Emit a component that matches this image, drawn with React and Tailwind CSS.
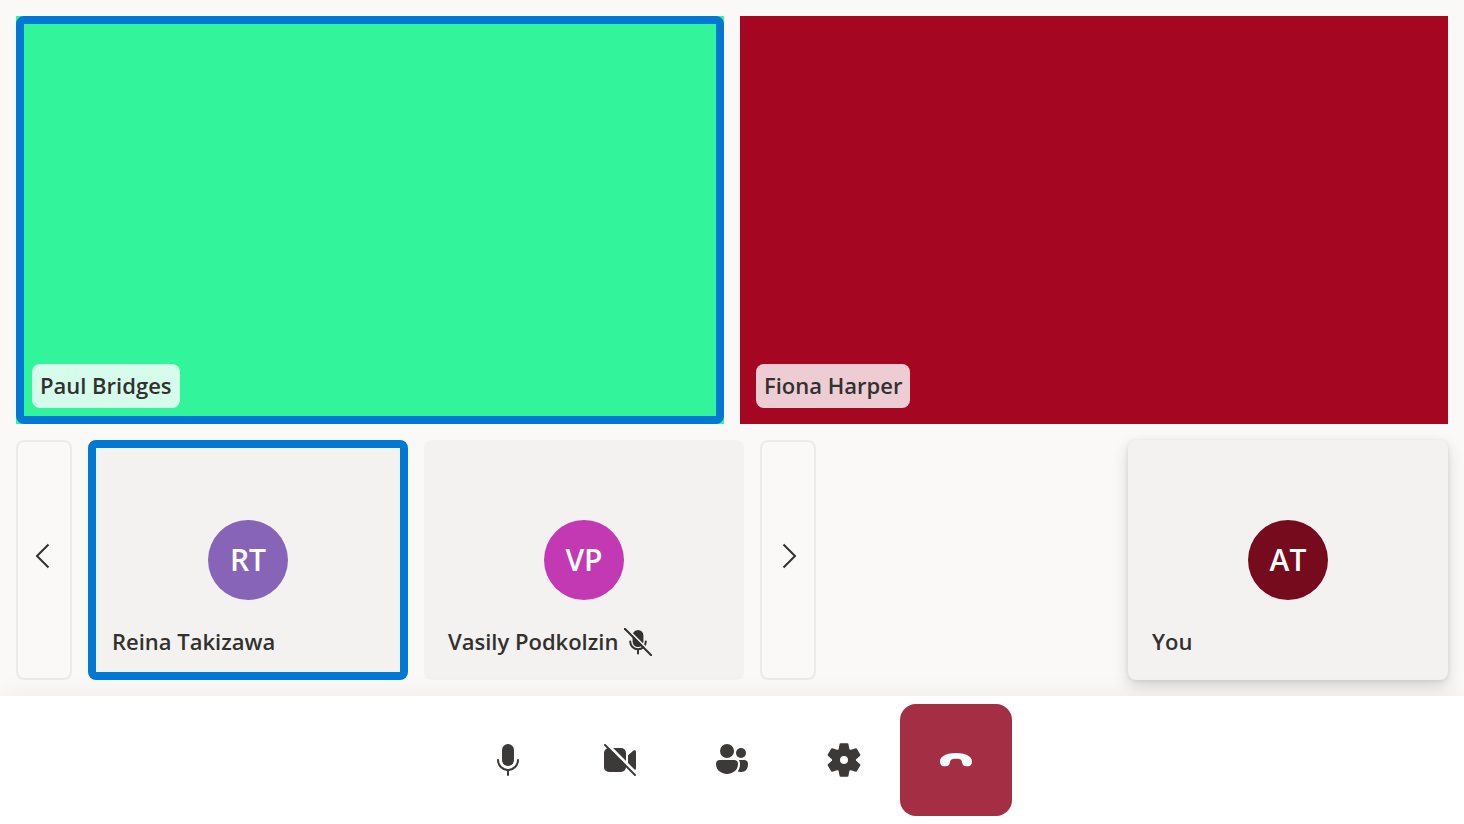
import React from "react";

function MicIcon() {
  return (
    <svg className="size-10" viewBox="0 0 20 20" fill="currentColor" aria-hidden="true">
      <rect x="7" y="2" width="6" height="11" rx="3" />
      <path d="M5 9.5c.28 0 .5.22.5.5a4.5 4.5 0 0 0 9 0 .5.5 0 0 1 1 0 5.5 5.5 0 0 1-5 5.48v2.02a.5.5 0 0 1-1 0v-2.02A5.5 5.5 0 0 1 4.5 10c0-.28.22-.5.5-.5z" />
    </svg>
  );
}

function VideoOffIcon() {
  return (
    <svg className="size-10" viewBox="0 0 20 20" fill="currentColor" aria-hidden="true">
      <rect x="2" y="4" width="11" height="12" rx="2.5" />
      <path d="M14 7.6 16.8 5.3C17.3 4.9 18 5.2 18 5.9v8.2c0 .7-.7 1-1.2.6L14 12.4z" />
      <path d="M3 1.6 18.8 17.4" stroke="#ffffff" strokeWidth="1.6" />
      <path d="M2.5 2.5 17.5 17.5" stroke="currentColor" strokeWidth="1" strokeLinecap="round" />
    </svg>
  );
}

function PeopleIcon() {
  return (
    <svg className="size-10" viewBox="0 0 20 20" fill="currentColor" aria-hidden="true">
      <circle cx="7.5" cy="5.5" r="3.5" />
      <circle cx="14.5" cy="6.5" r="2.5" />
      <path d="M4 10a2 2 0 0 0-2 2c0 1.7.7 2.9 1.9 3.8 1 .8 2.3 1.2 3.6 1.2s2.6-.4 3.6-1.2c1.2-.9 1.9-2.1 1.9-3.8a2 2 0 0 0-2-2z" />
      <path d="M13.4 10c.4.5.6 1.2.6 2 0 1.6-.4 2.9-1.2 3.8.5.15 1.1.2 1.7.2 2.4 0 3.5-1.6 3.5-4a2 2 0 0 0-2-2z" />
    </svg>
  );
}

function SettingsIcon() {
  return (
    <svg className="size-10" viewBox="-20 -20 40 40" fill="currentColor" aria-hidden="true">
      <path
        fillRule="evenodd"
        stroke="currentColor"
        strokeWidth="2"
        strokeLinejoin="round"
        d="M-3.4-15.8 3.4-15.8 4.55-10.08 6.45-8.98 11.98-10.84 15.38-4.96 11-1.1 11 1.1 15.38 4.96 11.98 10.84 6.45 8.98 4.55 10.08 3.4 15.8-3.4 15.8-4.55 10.08-6.45 8.98-11.98 10.84-15.38 4.96-11 1.1-11-1.1-15.38-4.96-11.98-10.84-6.45-8.98-4.55-10.08zM5 0A5 5 0 1 0-5 0 5 5 0 1 0 5 0z"
      />
    </svg>
  );
}

function EndCallIcon() {
  return (
    <svg className="h-4 w-8" viewBox="0 0 32 16" fill="currentColor" aria-hidden="true">
      <path d="M16 1C25 1 32 4 32 9.5c0 3-1.3 4.7-3.8 4.7h-2.3c-2 0-3-.9-3.5-2.7l-.8-2.8C21.2 7.3 19 6.7 16 6.7s-5.2.6-5.6 2l-.8 2.8c-.5 1.8-1.5 2.7-3.5 2.7H3.8C1.3 14.2 0 12.5 0 9.5 0 4 7 1 16 1z" />
    </svg>
  );
}

function MutedIcon() {
  return (
    <svg className="size-7" viewBox="0 0 28 28" fill="currentColor" aria-label="Muted" role="img">
      <rect x="8.6" y="2" width="10.8" height="17" rx="5.4" />
      <path d="M6.2 13.5a7.8 7.8 0 0 0 15.6 0M14 21.5v4" fill="none" stroke="currentColor" strokeWidth="2" strokeLinecap="round" />
      <path d="M1.2-1.2 29.2 26.8" stroke="#f3f2f1" strokeWidth="1.8" />
      <path d="M.8.8 27.2 27.2" stroke="currentColor" strokeWidth="2" strokeLinecap="round" />
    </svg>
  );
}

function PageButton({ label, path }) {
  return (
    <button
      type="button"
      aria-label={label}
      className="flex w-14 shrink-0 items-center justify-center rounded-lg border-2 border-[#edebe9] pb-2 text-[#323130]"
    >
      <svg className="size-7" viewBox="0 0 28 28" fill="none" stroke="currentColor" strokeWidth="2" aria-hidden="true">
        <path d={path} />
      </svg>
    </button>
  );
}

function VideoTile({ name, color, speaking }) {
  return (
    <section aria-label={name} className={`relative flex min-w-0 flex-1 items-end p-4 ${color}`}>
      {speaking && <div className="absolute inset-0 rounded-lg border-8 border-[#0078d4]" />}
      <span className="relative flex h-11 items-center rounded-lg bg-white/80 px-2 pb-0.5">{name}</span>
    </section>
  );
}

function AvatarTile({ name, initials, color, speaking, muted, floating }) {
  return (
    <section
      aria-label={name}
      className={`relative flex w-80 shrink-0 items-end rounded-lg bg-[#f3f2f1] p-4 ${
        floating ? "ml-auto shadow-[0_6px_16px_rgba(0,0,0,0.15),0_1px_4px_rgba(0,0,0,0.09)]" : ""
      }`}
    >
      {speaking && <div className="absolute inset-0 rounded-lg border-8 border-[#0078d4]" />}
      <div className="absolute inset-0 flex items-center justify-center">
        <div className={`flex size-20 items-center justify-center rounded-full text-[30px] text-white ${color}`}>
          {initials}
        </div>
      </div>
      <div className="relative flex h-11 items-center gap-1.5 px-2">
        <span className="pb-0.5">{name}</span>
        {muted && <MutedIcon />}
      </div>
    </section>
  );
}

function ControlButton({ label, danger, children }) {
  return (
    <button
      type="button"
      aria-label={label}
      className={`flex size-28 items-center justify-center rounded-2xl ${danger ? "bg-[#a42e43] text-white" : "text-[#3b3a39]"}`}
    >
      {children}
    </button>
  );
}

export default function App() {
  return (
    <div className="flex min-h-screen flex-col bg-[#faf9f8] font-['Open_Sans',sans-serif] text-[22px] leading-8 font-semibold text-[#323130]">
      <main className="flex flex-1 flex-col gap-4 p-4">
        <div className="flex min-h-60 flex-1 gap-4">
          <VideoTile name="Paul Bridges" color="bg-[#32f59b]" speaking />
          <VideoTile name="Fiona Harper" color="bg-[#a50621]" />
        </div>
        <div className="flex h-60 gap-4">
          <PageButton label="Previous participants" path="M18.500 2.500 7 14l11.500 11.500" />
          <AvatarTile name="Reina Takizawa" initials="RT" color="bg-[#8764b8]" speaking />
          <AvatarTile name="Vasily Podkolzin" initials="VP" color="bg-[#c239b3]" muted />
          <PageButton label="Next participants" path="M9.500 2.500 21 14 9.500 25.500" />
          <AvatarTile name="You" initials="AT" color="bg-[#750b1c]" floating />
        </div>
      </main>
      <footer className="relative flex justify-center bg-white p-2 shadow-[0_0_24px_rgba(0,0,0,0.06)]">
        <ControlButton label="Mute"><MicIcon /></ControlButton>
        <ControlButton label="Turn on camera"><VideoOffIcon /></ControlButton>
        <ControlButton label="People"><PeopleIcon /></ControlButton>
        <ControlButton label="Settings"><SettingsIcon /></ControlButton>
        <ControlButton label="Leave call" danger><EndCallIcon /></ControlButton>
      </footer>
    </div>
  );
}
